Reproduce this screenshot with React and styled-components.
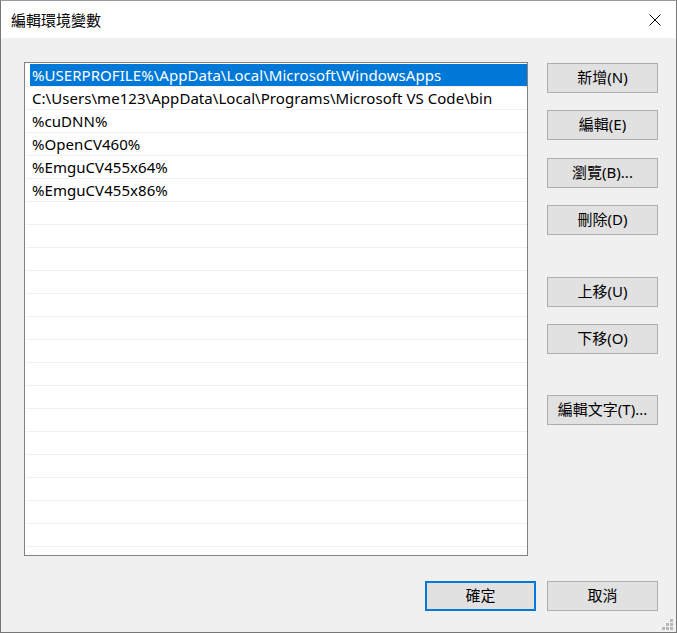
import React from 'react'
import styled, { createGlobalStyle } from 'styled-components'

const GlobalStyle = createGlobalStyle`
  html, body {
    margin: 0;
    padding: 0;
    background: #f0f0f0;
  }
  body {
    font-family: 'Noto Sans', 'Noto Sans CJK TC', sans-serif;
  }
`

const UI_FONT = `'Noto Sans', 'Noto Sans CJK TC', sans-serif`

const Window = styled.div`
  position: relative;
  box-sizing: border-box;
  width: 677px;
  height: 633px;
  border: 1px solid #777777;
  border-top-color: #9a9a9a;
  background: #f0f0f0;
  display: flex;
  flex-direction: column;
  font-family: ${UI_FONT};
  font-size: 15px;
  color: #000;
  overflow: hidden;
`

const TitleBar = styled.div`
  height: 37px;
  flex: none;
  background: #fff;
  display: flex;
  align-items: center;
  justify-content: space-between;
  padding: 0 15px 0 10px;
`

const Title = styled.span`
  font-family: 'Noto Sans CJK TC', sans-serif;
  font-size: 15px;
  line-height: 1;
  margin-bottom: 1px;
`

const CloseIcon = styled.svg`
  display: block;
  width: 12px;
  height: 12px;
`

const Body = styled.div`
  flex: 1;
  display: flex;
  flex-direction: column;
  padding: 24px 18px 0 23px;
`

const Main = styled.div`
  display: flex;
  align-items: flex-start;
  gap: 19px;
`

const ListBox = styled.div`
  box-sizing: border-box;
  width: 504px;
  height: 494px;
  border: 1px solid #828282;
  background: #fff;
  padding: 1px 0 0 1px;
  overflow: hidden;
`

const Row = styled.div`
  display: flex;
  height: 22px;
  width: 500px;
  border-bottom: 1px solid #f0f0f0;
  padding-left: 4px;
  box-sizing: content-box;
`

const Cell = styled.div`
  flex: 1;
  display: flex;
  align-items: center;
  padding-left: 2px;
  white-space: nowrap;
  font-family: ${UI_FONT};
  font-size: 15px;
  letter-spacing: 0.05px;
  background: ${p => (p.$selected ? '#0078d7' : 'transparent')};
  color: ${p => (p.$selected ? '#fff' : '#000')};
`

const ButtonColumn = styled.div`
  width: 111px;
  display: flex;
  flex-direction: column;
  padding-top: 1px;
`

const Button = styled.button`
  box-sizing: border-box;
  width: 111px;
  height: 30px;
  margin: 0;
  margin-top: ${p => p.$space || 0}px;
  padding: 0 0 3px;
  background: #e1e1e1;
  border: ${p => (p.$default ? '2px solid #0078d7' : '1px solid #adadad')};
  border-radius: 0;
  font-family: ${UI_FONT};
  font-size: 15px;
  color: #000;
  display: flex;
  align-items: center;
  justify-content: center;
`

const Footer = styled.div`
  display: flex;
  justify-content: flex-end;
  gap: 11px;
  margin-top: 25px;
`

const Grip = styled.svg`
  position: absolute;
  right: 3px;
  bottom: 2px;
  width: 11px;
  height: 11px;
`

const entries = [
  '%USERPROFILE%\\AppData\\Local\\Microsoft\\WindowsApps',
  'C:\\Users\\me123\\AppData\\Local\\Programs\\Microsoft VS Code\\bin',
  '%cuDNN%',
  '%OpenCV460%',
  '%EmguCV455x64%',
  '%EmguCV455x86%',
]

const sideButtons = [
  { label: '新增(N)', space: 0 },
  { label: '編輯(E)', space: 17 },
  { label: '瀏覽(B)...', space: 18 },
  { label: '刪除(D)', space: 17 },
  { label: '上移(U)', space: 42 },
  { label: '下移(O)', space: 17 },
  { label: '編輯文字(T)...', space: 41 },
]

export default function App() {
  const rows = Array.from({ length: 22 }, (_, i) => entries[i] || '')

  return (
    <>
      <GlobalStyle />
      <Window>
        <TitleBar>
          <Title>編輯環境變數</Title>
          <CloseIcon viewBox="0 0 12 12">
            <path d="M0.5 0.5 L11.5 11.5 M11.5 0.5 L0.5 11.5" stroke="#000" strokeWidth="1" fill="none" />
          </CloseIcon>
        </TitleBar>

        <Body>
          <Main>
            <ListBox>
              {rows.map((text, i) => (
                <Row key={i}>
                  <Cell $selected={i === 0}>{text}</Cell>
                </Row>
              ))}
            </ListBox>

            <ButtonColumn>
              {sideButtons.map(b => (
                <Button key={b.label} $space={b.space}>
                  {b.label}
                </Button>
              ))}
            </ButtonColumn>
          </Main>

          <Footer>
            <Button $default>確定</Button>
            <Button>取消</Button>
          </Footer>
        </Body>

        <Grip viewBox="0 0 11 11">
          <rect x="8" y="0" width="3" height="3" fill="#b8b8b8" />
          <rect x="4" y="4" width="3" height="3" fill="#b8b8b8" />
          <rect x="8" y="4" width="3" height="3" fill="#b8b8b8" />
          <rect x="0" y="8" width="3" height="3" fill="#b8b8b8" />
          <rect x="4" y="8" width="3" height="3" fill="#b8b8b8" />
          <rect x="8" y="8" width="3" height="3" fill="#b8b8b8" />
        </Grip>
      </Window>
    </>
  )
}
